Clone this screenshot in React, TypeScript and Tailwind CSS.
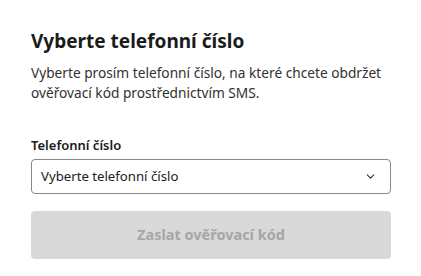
import { ChevronDown } from "lucide-react"

export default function App() {
  return (
    <div className="min-h-screen bg-white px-[31px] pt-[28px] text-[#1b1b1b]" style={{ fontFamily: '"Noto Sans", "Open Sans", sans-serif' }}>
      <div className="w-[360px]">
        <h1 className="text-[19px] font-bold leading-[26px] text-[#1b1b1b]">Vyberte telefonní číslo</h1>
        <p className="mt-[9px] text-[13.7px] leading-[20px] text-[#323130]">
          Vyberte prosím telefonní číslo, na které chcete obdržet ověřovací kód prostřednictvím SMS.
        </p>
        <label className="mt-[32px] block text-[13px] font-semibold leading-[20px] text-[#1b1b1b]">Telefonní číslo</label>
        <button
          type="button"
          className="mt-[4px] flex h-[35px] w-full items-center justify-between rounded-[4px] border border-[#8a8886] bg-white pl-[9px] pr-[13px] text-left text-[13.2px] text-[#1b1b1b]"
        >
          <span>Vyberte telefonní číslo</span>
          <ChevronDown className="h-[13px] w-[13px] text-[#323130]" strokeWidth={2} />
        </button>
        <button
          type="button"
          disabled
          className="mt-[17px] flex h-[48px] w-full items-center justify-center rounded-[4px] bg-[#d9d9d9] text-[14.5px] font-bold text-[#a6a6a6]"
        >
          Zaslat ověřovací kód
        </button>
      </div>
    </div>
  )
}
